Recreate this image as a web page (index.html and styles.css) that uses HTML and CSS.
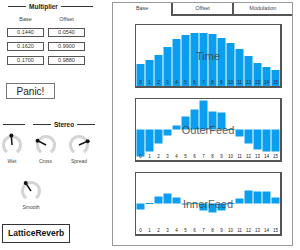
FILE: index.html
```html
<!DOCTYPE html>
<html lang="en">
<head>
  <meta charset="UTF-8">
  <title>LatticeReverb</title>
  <link rel="stylesheet" href="styles.css">
</head>
<body>
  <div class="app">
    <div class="side">
      <div class="group-title multiplier">
        <span class="line short"></span><span class="title">Multiplier</span><span class="line"></span>
      </div>
      <div class="mult-grid">
        <div class="col-label">Base</div><div class="col-label">Offset</div>
        <div class="num">0.1440</div><div class="num">0.0540</div>
        <div class="num">0.1620</div><div class="num">0.9900</div>
        <div class="num">0.1700</div><div class="num">0.9880</div>
      </div>
      <button class="panic">Panic!</button>
      <div class="stereo-row">
        <span class="lone"></span>
        <div class="group-title stereo">
          <span class="line"></span><span class="title">Stereo</span><span class="line"></span>
        </div>
      </div>
      <div class="knob-row">
        <div class="knob" data-angle="-4"><svg viewBox="0 0 22 22"></svg><span>Wet</span></div>
        <div class="knob" data-angle="-63"><svg viewBox="0 0 22 22"></svg><span>Cross</span></div>
        <div class="knob" data-angle="66"><svg viewBox="0 0 22 22"></svg><span>Spread</span></div>
      </div>
      <div class="knob-row single">
        <div class="knob" data-angle="-34"><svg viewBox="0 0 22 22"></svg><span>Smooth</span></div>
      </div>
      <div class="brand">LatticeReverb</div>
    </div>

    <div class="panel">
      <div class="tabs">
        <div class="tab">Base</div>
        <div class="tab off">Offset</div>
        <div class="tab off">Modulation</div>
      </div>
      <div class="graphs" id="graphs"></div>
    </div>
  </div>

  <script>
    // Bar graphs (values in pixels of the 61px tall plot area)
    const graphs = [
      { name: 'Time', bipolar: false, values: [22, 26, 31, 39, 47, 51, 53, 53, 52, 48, 43, 37, 30, 23, 19, 16] },
      { name: 'OuterFeed', bipolar: true, values: [-27, -22, -14, -6, 4, 13, 20, 29, 18, 17, 0, -7, -14, -20, -22, -22] },
      { name: 'InnerFeed', bipolar: true, values: [-6, 0, 7, 10, 6, -1, 0, -7, -9, -7, 0, 5, 13, 12, 12, 6] }
    ];

    const holder = document.getElementById('graphs');
    graphs.forEach(g => {
      let s = '<svg width="144" height="61" viewBox="0 0 144 61">';
      g.values.forEach((v, i) => {
        let y, h;
        if (!g.bipolar) {
          h = v; y = 61 - v;
        } else {
          const zero = 30.5;
          h = Math.max(Math.abs(v), 1);
          y = v > 0 ? zero - h : (v === 0 ? zero - 0.5 : zero);
        }
        s += `<rect class="bar" x="${i * 9 + 0.5}" y="${y}" width="8" height="${h}"></rect>`;
        s += `<text class="idx" x="${i * 9 + 4.5}" y="58.5">${i}</text>`;
      });
      s += `<text class="name" x="72" y="34.5">${g.name}</text></svg>`;
      const box = document.createElement('div');
      box.className = 'graph';
      box.innerHTML = s;
      holder.appendChild(box);
    });

    // Knobs
    const pt = (r, a) => [11 + r * Math.sin(a), 11 - r * Math.cos(a)];
    document.querySelectorAll('.knob').forEach(k => {
      const a = +k.dataset.angle * Math.PI / 180;
      const [sx, sy] = pt(8.5, -145 * Math.PI / 180);
      const [ex, ey] = pt(8.5, 145 * Math.PI / 180);
      const [tx, ty] = pt(9.5, a);
      k.querySelector('svg').innerHTML =
        `<path d="M${sx} ${sy} A8.5 8.5 0 1 1 ${ex} ${ey}" class="ring"></path>` +
        `<line x1="11" y1="11" x2="${tx}" y2="${ty}" class="pointer"></line>` +
        `<circle cx="${tx}" cy="${ty}" r="2" class="dot"></circle>`;
    });
  </script>
</body>
</html>
```

FILE: styles.css
```css
* {
  box-sizing: border-box;
}
body {
  margin: 0;
  width: 300px;
  height: 250px;
  overflow: hidden;
  background: #fff;
  font-family: "Liberation Sans", Arial, sans-serif;
  color: #333;
}
.app {
  display: flex;
}

/* left column */
.side {
  width: 112px;
  display: flex;
  flex-direction: column;
  align-items: flex-start;
}
.group-title {
  display: flex;
  align-items: center;
  height: 8px;
}
.group-title .line {
  flex: 1;
  height: 1px;
  background: #333;
}
.group-title .title {
  font-weight: bold;
  font-size: 6.5px;
  padding: 0 3px;
  color: #222;
}
.multiplier {
  margin: 2px 0 0 8px;
  width: 85px;
}
.multiplier .line.short {
  flex: 0 0 18px;
}
.mult-grid {
  display: grid;
  grid-template-columns: 37px 37px;
  grid-template-rows: 8px repeat(3, 9px);
  gap: 5px 4px;
  margin: 5px 0 0 7px;
}
.col-label {
  font-size: 5.5px;
  line-height: 8px;
  text-align: center;
  color: #444;
}
.num {
  border: 1px solid #555;
  font-size: 5.5px;
  line-height: 7px;
  text-align: center;
  color: #333;
}
.panic {
  margin: 18px 0 0 6px;
  width: 49px;
  height: 16px;
  padding: 0;
  border: 1px solid #777;
  background: #fff;
  font-family: "Liberation Sans", Arial, sans-serif;
  font-size: 10px;
  color: #222;
}
.stereo-row {
  display: flex;
  align-items: center;
  height: 8px;
  margin-top: 21px;
}
.lone {
  width: 22px;
  height: 1px;
  margin-left: 3px;
  background: #333;
}
.stereo {
  margin-left: 8px;
  width: 62px;
}
.knob-row {
  display: flex;
  gap: 9.5px;
  margin-top: 6px;
}
.knob-row.single {
  margin: 15px 0 0 19px;
}
.knob {
  width: 24px;
  display: flex;
  flex-direction: column;
  align-items: center;
  font-size: 5px;
  color: #444;
}
.knob svg {
  display: block;
  width: 22px;
  height: 22px;
  overflow: visible;
}
.knob span {
  margin-top: 2px;
  line-height: 7px;
}
.ring {
  fill: none;
  stroke: #d4d4d4;
  stroke-width: 3;
}
.pointer {
  stroke: #111;
  stroke-width: 1.5;
}
.dot {
  fill: #111;
}
.brand {
  margin: 13px 0 0 2px;
  width: 68px;
  height: 19px;
  padding-left: 5px;
  border: 1px solid #333;
  font-weight: bold;
  font-size: 8.5px;
  line-height: 17px;
  color: #111;
}

/* right panel */
.panel {
  width: 181px;
  height: 244px;
  margin-top: 2px;
  border: 1px solid #999;
  display: flex;
  flex-direction: column;
}
.tabs {
  display: flex;
  height: 13px;
}
.tab {
  flex: 1;
  font-size: 5.5px;
  line-height: 11px;
  text-align: center;
  color: #444;
}
.tab.off {
  border-left: 2px solid #555;
  border-bottom: 2px solid #555;
}
.graphs {
  display: flex;
  flex-direction: column;
  gap: 10px;
  padding: 8px 0 0 22px;
}
.graph {
  width: 147px;
  height: 64px;
  border: 1px solid #555;
  border-right-width: 2px;
  border-bottom-width: 2px;
}
.graph svg {
  display: block;
}
.bar {
  fill: #0a9ef0;
}
.idx {
  font-size: 4.5px;
  fill: #222;
  text-anchor: middle;
}
.name {
  font-size: 11px;
  fill: #444;
  opacity: 0.85;
  text-anchor: middle;
}
```
